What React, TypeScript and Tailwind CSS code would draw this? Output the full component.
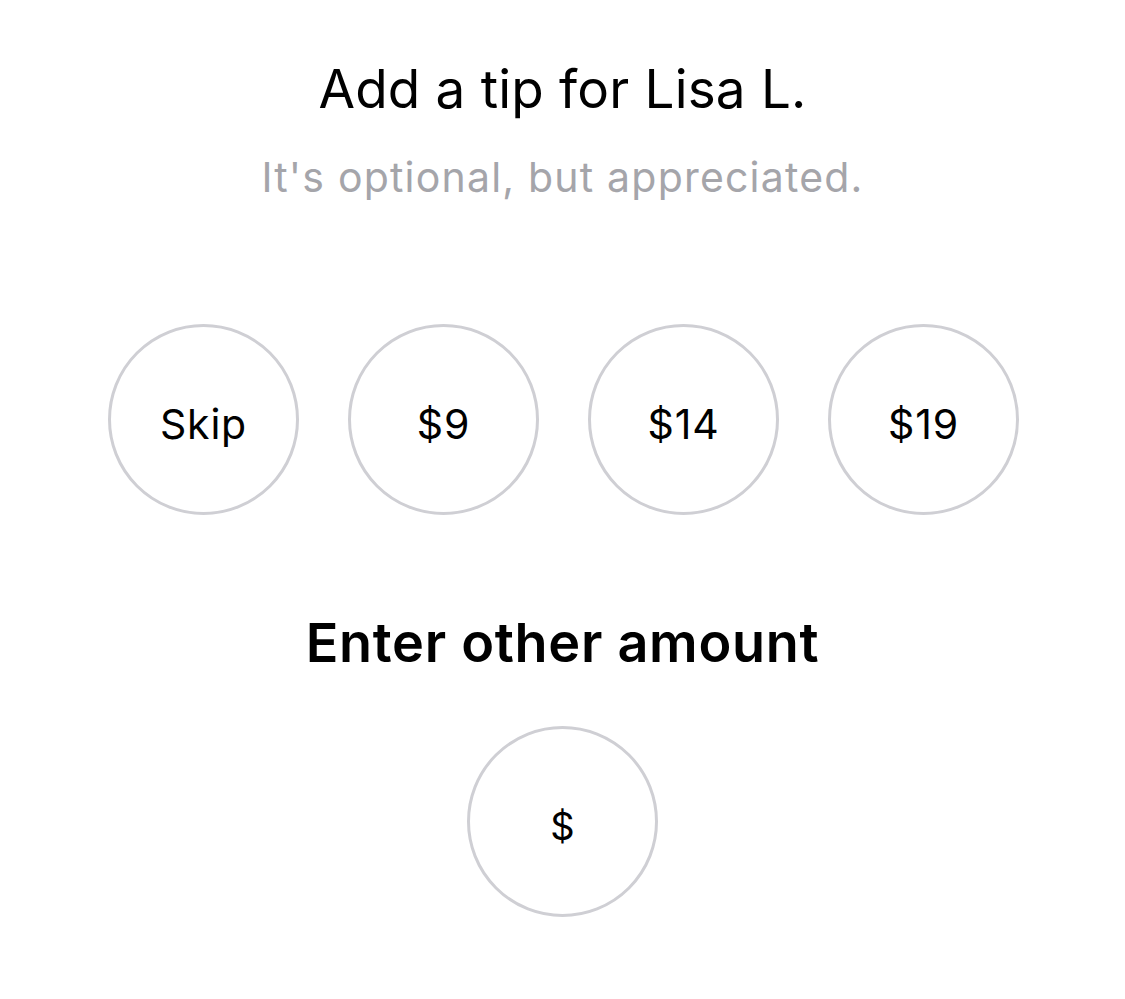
const amounts = ["Skip", "$9", "$14", "$19"];

function Circle({ children, className = "" }: { children: React.ReactNode; className?: string }) {
  return (
    <button
      type="button"
      className={`flex h-[191px] w-[191px] items-center justify-center rounded-full border-[3px] border-[#cfcfd4] bg-white text-black ${className}`}
    >
      {children}
    </button>
  );
}

export default function App() {
  return (
    <div className="flex min-h-[999px] w-full flex-col items-center bg-white font-['Inter',sans-serif]">
      <h1 className="mt-[56px] text-[53px] leading-[66px] font-normal tracking-[0.2px] text-black">
        Add a tip for Lisa L.
      </h1>
      <p className="mt-[30px] text-[41px] leading-[50px] tracking-[1.2px] text-[#a5a5aa]">
        It's optional, but appreciated.
      </p>
      <div className="mt-[122px] flex gap-[49px] pl-[2px]">
        {amounts.map((a) => (
          <Circle key={a} className="pt-[10px] text-[41px] tracking-[0.8px]">
            {a}
          </Circle>
        ))}
      </div>
      <h2 className="mt-[96px] text-[54px] leading-[64px] font-semibold tracking-[0.7px] text-black">
        Enter other amount
      </h2>
      <div className="mt-[51px]">
        <Circle className="pt-[10px] text-[38px]">$</Circle>
      </div>
    </div>
  );
}
